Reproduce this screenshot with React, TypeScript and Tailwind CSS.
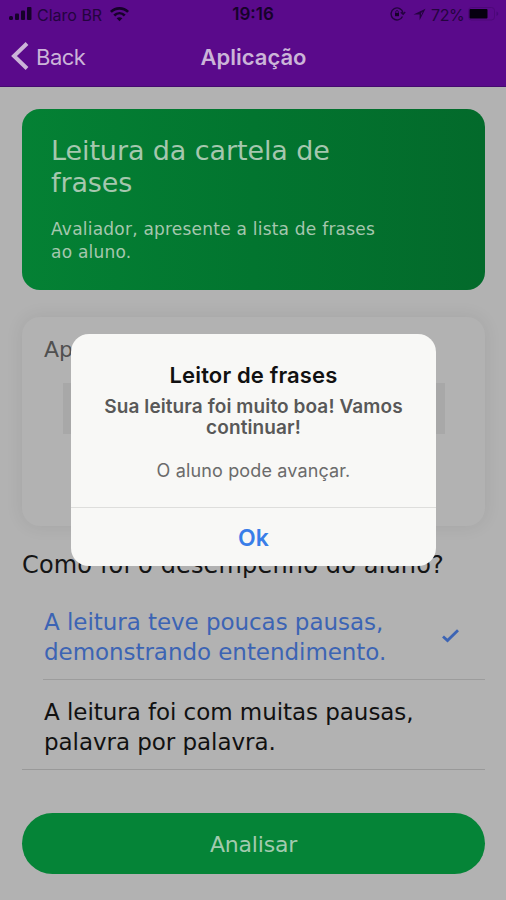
import * as React from "react"

function StatusBar() {
  return (
    <div className="flex h-7 items-center pr-[7px] pl-[9px] font-[Inter,sans-serif] text-[16px] text-[#24043f]">
      <div className="flex w-40 items-center">
        <svg width="23" height="14" viewBox="0 0 23 14" fill="#16022a" aria-hidden="true">
          <rect x="0" y="9" width="4" height="4" rx="1.5" />
          <rect x="6" y="6.5" width="4" height="6.5" rx="1" />
          <rect x="12" y="3.5" width="4" height="9.5" rx="1" />
          <rect x="18" y="0" width="4.5" height="13" rx="1" />
        </svg>
        <span className="ml-[5px] w-[66px] pt-px whitespace-nowrap">Claro BR</span>
        <svg className="ml-1.5" width="21" height="16" viewBox="0 0 22 16" fill="none" stroke="#16022a" strokeWidth="2.8" aria-hidden="true">
          <path d="M2 5.8C7 0.8 15 0.8 20 5.8" />
          <path d="M5.5 9.5C8.7 6.4 13.3 6.4 16.5 9.5" />
          <path d="M8 12.5C9.8 11 12.2 11 14 12.5L11 15.5z" fill="#16022a" stroke="none" />
        </svg>
      </div>
      <div className="flex-1 pt-0.5 pr-0.5 text-center text-[17px] font-semibold text-[#16022a]">19:16</div>
      <div className="flex w-40 items-center justify-end">
        <svg width="16" height="14" viewBox="0 0 16 14" fill="none" stroke="#24043f" strokeWidth="1.4" aria-hidden="true">
          <path d="M12.5 9.5A6 6 0 1 1 13 6" />
          <path d="M10.8 5.3l2.3 2 2.1-2.3" />
          <rect x="5" y="6" width="4" height="3.2" fill="#16022a" stroke="none" />
          <path d="M5.8 6V4.5a1.3 1.3 0 0 1 2.5 0V6" strokeWidth="1" />
        </svg>
        <svg className="ml-[7px]" width="13" height="13" viewBox="0 0 13 13" fill="#24043f" aria-hidden="true">
          <path fillRule="evenodd" d="M12.5 0.8L0.5 6.4H6.6V12.2zM9.8 3.4L8 7.5V5z" />
        </svg>
        <span className="ml-[5px] w-[35px] pt-px tracking-[-0.4px] whitespace-nowrap">72%</span>
        <svg className="ml-0.5" width="31" height="14" viewBox="0 0 31 14" aria-hidden="true">
          <rect x="0.5" y="0.5" width="26" height="12.5" rx="3" fill="none" stroke="#4d0879" />
          <rect x="1.5" y="2" width="18" height="9.5" rx="1" fill="#060010" />
          <path d="M28.5 4.5c2.3 0.8 2.3 3.7 0 4.5z" fill="#470777" />
        </svg>
      </div>
    </div>
  )
}

function Header() {
  return (
    <header className="h-[87px] border-b border-[#450b70] bg-[#5a0a8b]">
      <StatusBar />
      <div className="flex h-[58px] items-center px-[11px] font-[Inter,sans-serif] text-[#cbb5d8]">
        <button type="button" className="flex w-40 items-center text-[22px] tracking-[-0.5px]">
          <svg className="-mt-0.5" width="18" height="28" viewBox="0 0 18 28" fill="none" stroke="currentColor" strokeWidth="4" aria-hidden="true">
            <path d="M16 1.5L3 14L16 26.5" />
          </svg>
          <span className="ml-[7px]">Back</span>
        </button>
        <h1 className="flex-1 pl-px text-center text-[22px] font-semibold">Aplicação</h1>
        <div className="w-40" />
      </div>
    </header>
  )
}

function Alert() {
  return (
    <div
      role="alertdialog"
      className="absolute top-[334px] left-[71px] flex h-[232px] w-[365px] flex-col overflow-hidden rounded-[18px] bg-[#f8f8f6] text-center font-[Inter,sans-serif]"
    >
      <div className="flex-1 pt-[27px]">
        <h2 className="text-[22px] leading-7 font-semibold tracking-[0.15px] text-[#111]">Leitor de frases</h2>
        <p className="mt-[7px] text-[19px] leading-[21px] font-semibold tracking-[0.1px] text-[#585858]">
          Sua leitura foi muito boa! Vamos
          <br />
          continuar!
        </p>
        <p className="mt-[22px] text-[18px] leading-[22px] tracking-[0.14px] text-[#6b6b6b]">O aluno pode avançar.</p>
      </div>
      <button type="button" className="h-[59px] border-t border-[#dededc] pt-0.5 text-[23px] font-semibold text-[#397ee8]">
        Ok
      </button>
    </div>
  )
}

export default function App() {
  return (
    <div className="relative h-[900px] w-[506px] overflow-hidden bg-[#b2b2b2] font-['DejaVu_Sans',Verdana,sans-serif]">
      <Header />
      <main className="pt-[22px] pr-[21px] pl-[22px]">
        <section className="h-[181px] rounded-[18px] bg-linear-to-r from-[#048134] via-[#02752f] to-[#036a2b] px-[29px] pt-[26px] text-[#a5c7ae]">
          <h2 className="text-[27px] leading-8 tracking-[-0.1px]">
            Leitura da cartela de
            <br />
            frases
          </h2>
          <p className="mt-[19px] text-[17px] leading-[23px] tracking-[0.22px]">
            Avaliador, apresente a lista de frases
            <br />
            ao aluno.
          </p>
        </section>

        <section className="mt-[27px] h-[209px] rounded-[18px] bg-[#b2b2b2] px-[22px] pt-[18px] shadow-[0_0_18px_rgba(0,0,0,0.08)]">
          <p className="text-[22px] leading-[30px] text-[#505050]">Ap</p>
          <div className="mt-[18px] mr-[18px] ml-[19px] h-[51px] bg-[#a8a8a8]" />
        </section>

        <h3 className="mt-[23px] text-[24px] leading-8 tracking-[0.16px] whitespace-nowrap text-[#151515]">
          Como foi o desempenho do aluno?
        </h3>

        <ul className="mt-[26px] border-b border-[#999] text-[23px] leading-[30px] tracking-[-0.05px]">
          <li className="ml-[21px] flex h-[73px] items-start justify-between border-b border-[#9c9c9c] pl-px text-[#3c64b4]">
            <span>
              A leitura teve poucas pausas,
              <br />
              demonstrando entendimento.
            </span>
            <svg className="mt-[22px] mr-[26px]" width="17" height="14" viewBox="0 0 17 14" fill="none" stroke="currentColor" strokeWidth="2.8" aria-hidden="true">
              <path d="M1 7.5L5.5 11.6L16 1.2" />
            </svg>
          </li>
          <li className="h-[89px] pt-[17px] pl-[22px] text-[#111]">
            A leitura foi com muitas pausas,
            <br />
            palavra por palavra.
          </li>
        </ul>

        <button
          type="button"
          className="mt-[43px] h-[61px] w-full rounded-full bg-[#058437] pt-px text-[22px] tracking-[-0.2px] text-[#a2caae]"
        >
          Analisar
        </button>
      </main>
      <Alert />
    </div>
  )
}
